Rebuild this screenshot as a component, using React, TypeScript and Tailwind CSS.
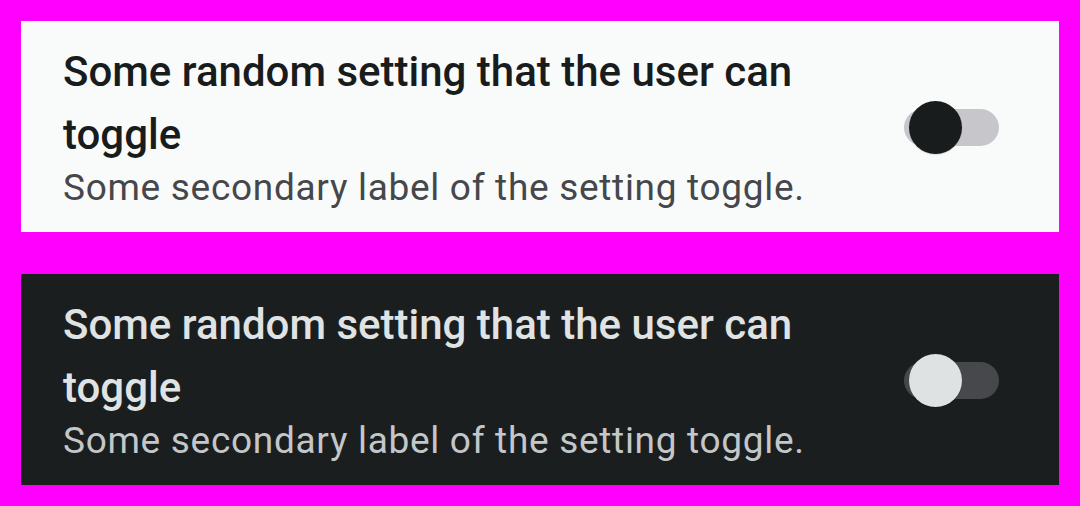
const rows = [
  {
    panel: "bg-[#f9fbfb]",
    title: "text-[#191c1d]",
    sub: "text-[#45474a]",
    thumb: "bg-[#191c1d]",
    track: "bg-[#c7c7cb]",
  },
  {
    panel: "bg-[#1b1e1f]",
    title: "text-[#e0e3e3]",
    sub: "text-[#c4c7c9]",
    thumb: "bg-[#dfe2e3]",
    track: "bg-[#47484c]",
  },
]

function SettingRow({ r }: { r: (typeof rows)[number] }) {
  return (
    <div className={`flex flex-1 items-center pl-[42px] pr-[60px] ${r.panel}`}>
      <div className="flex-1 self-start pt-[19px] pr-[24px]">
        <p className={`text-[42px] leading-[63px] font-medium ${r.title}`}>
          Some random setting that the user can toggle
        </p>
        <p className={`mt-[4px] text-[37px] leading-[36px] tracking-[0.7px] ${r.sub}`}>
          Some secondary label of the setting toggle.
        </p>
      </div>
      <div className="relative w-[95px] h-[53px] mt-[2px] flex items-center">
        <div className={`w-[95px] h-[37px] rounded-full ${r.track}`} />
        <div className={`absolute left-[5px] top-0 size-[53px] rounded-full shadow-[0_1px_1px_rgba(0,0,0,0.12)] ${r.thumb}`} />
      </div>
    </div>
  )
}

export default function App() {
  return (
    <div className="h-[506px] w-[1080px] bg-[#ff00ff] p-[21px] flex flex-col gap-[42px] font-['Roboto',sans-serif]">
      {rows.map((r, i) => (
        <SettingRow key={i} r={r} />
      ))}
    </div>
  )
}
